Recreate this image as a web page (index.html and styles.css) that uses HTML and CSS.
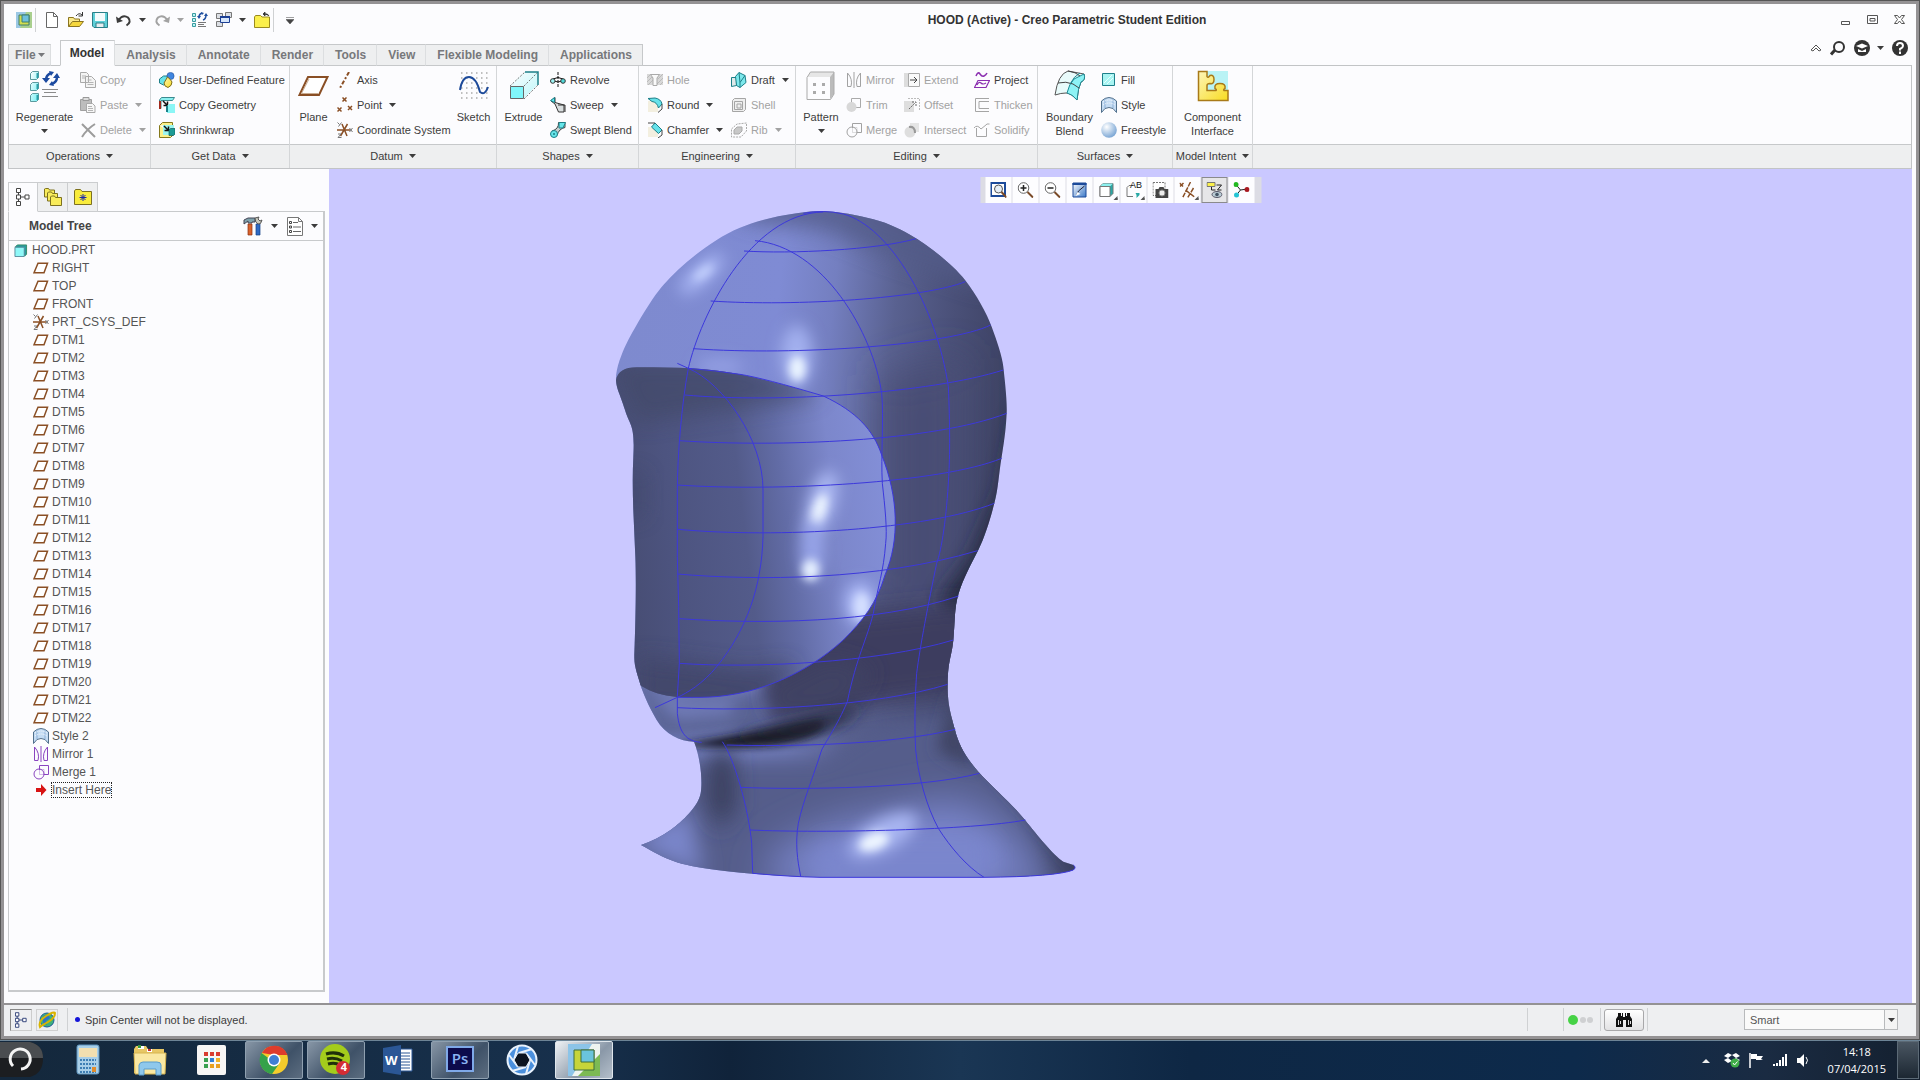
FILE: index.html
```html
<!DOCTYPE html>
<html lang="en">
<head>
    <meta charset="UTF-8">
    <meta name="viewport" content="width=device-width, initial-scale=1.0">
    <title>HOOD (Active) - Creo Parametric Student Edition</title>
    <link rel="stylesheet" href="styles.css">
</head>
<body>
    <!-- Shared icons -->
    <svg class="sprite" aria-hidden="true">
        <linearGradient id="gCyan" x1="0" y1="0" x2="1" y2="1"><stop offset="0" stop-color="#fff"/><stop offset="1" stop-color="#6ff0f4"/></linearGradient>
        <linearGradient id="gYellow" x1="0" y1="0" x2="1" y2="1"><stop offset="0" stop-color="#fdf5b8"/><stop offset="1" stop-color="#f8dc20"/></linearGradient>
        <linearGradient id="gBlue" x1="0" y1="0" x2="1" y2="1"><stop offset="0" stop-color="#fff"/><stop offset="1" stop-color="#3a78c8"/></linearGradient>
        <radialGradient id="gBall" cx=".35" cy=".3" r=".7"><stop offset="0" stop-color="#fff"/><stop offset="1" stop-color="#7fa9d6"/></radialGradient>

        <symbol id="caret" viewBox="0 0 7 4"><path d="M0 0h7L3.500 4z" fill="currentColor"/></symbol>
        <symbol id="logo" viewBox="0 0 16 16"><path d="M0 0h16v16H0z" fill="#a9cf8e"/><path d="M0 0h10L4 16H0z" fill="#9cc8e4"/><path d="M3 3h10v10H3z" fill="#d2dd4f" stroke="#3f7f6c"/><path d="M6 3h7v7H6z" fill="#6fc0dc" stroke="#3f7f6c"/></symbol>
        <symbol id="new" viewBox="0 0 16 16"><path d="M2.500.5h7l4 4v11h-11zM9.500.5v4h4" fill="#fff" stroke="#666"/></symbol>
        <symbol id="open" viewBox="0 0 16 16"><path d="M.5 14.500v-9h5l1 1.500h5v3" fill="#fbe98a" stroke="#8a7420"/><path d="M.5 14.500l4-5h11l-4 5z" fill="#f6d73c" stroke="#8a7420"/><path d="M8 4q3-4 6-1M14.500 0v4h-4" fill="none" stroke="#333"/></symbol>
        <symbol id="save" viewBox="0 0 16 16"><path d="M.5.5h15v15H2L.5 14z" fill="#5fd0d8" stroke="#2b7f88"/><path d="M3 1h10v8H3z" fill="#f4fbfc"/><path d="M4 11h8v4.500H4z" fill="#e8eef0" stroke="#2b7f88"/></symbol>
        <symbol id="undo" viewBox="0 0 16 16"><path d="M2.500 8Q7 2 12 5.500 16 10 10.500 13.500" fill="none" stroke="currentColor" stroke-width="2"/><path d="M0 4.500l1 6.500 6-2z" fill="currentColor"/></symbol>
        <symbol id="redo" viewBox="0 0 16 16"><path d="M13.500 8Q9 2 4 5.500 0 10 5.500 13.500" fill="none" stroke="currentColor" stroke-width="2"/><path d="M16 4.500l-1 6.500-6-2z" fill="currentColor"/></symbol>
        <symbol id="regen-s" viewBox="0 0 16 16"><path d="M.5 1.500h3v3h-3zM.5 6.500h3v3h-3zM.5 11.500h3v3h-3z" fill="#bdf6f6" stroke="#3a9aa0"/><path d="M7 5q0-3 3-4M14 3q0 4-3 5" fill="none" stroke="#2050a0" stroke-width="1.500"/><path d="M5 4h4L7 7zM12 4h4l-2-3zM9 0l3 1-2 2z" fill="#2050a0"/><path d="M6 10.500h8M6 12.500h6M6 14.500h8" stroke="#777"/></symbol>
        <symbol id="windows" viewBox="0 0 16 16"><path d="M.5 1.500h6v5h-6zM9.500.5h6v5h-6zM.5 9.500h6v5h-6z" fill="#dcdfe4" stroke="#777"/><path d="M4.500 4.500h9v6h-9z" fill="#d6e6fb" stroke="#1c3f94"/><path d="M4 5h10" stroke="#1c3f94" stroke-width="2"/></symbol>
        <symbol id="closefolder" viewBox="0 0 16 16"><path d="M.5 15.500V5l1-1.500h5L8 5h7.500v10.500z" fill="#fbef4c" stroke="#9a8a20"/><path d="M9 2l2-2v4zM10 2q4-1 5 2" fill="#333" stroke="#333" stroke-width=".8"/></symbol>

        <symbol id="regen" viewBox="0 0 32 32"><g fill="url(#gCyan)" stroke="#5b9a9e"><path d="M1.500 3.500l2-2h6v6l-2 2h-6zM1.500 14.500l2-2h6v6l-2 2h-6zM1.500 25.500l2-2h6v6l-2 2h-6z"/></g><path d="M8.500 3v5M8.500 14v5M8.500 25v5" stroke="#2aa0a8" stroke-width="2"/><path d="M17 10q0-5 5-7M28 7q0 5-5 7" fill="none" stroke="#1c4aa0" stroke-width="2.500"/><path d="M13 8h8l-4 5zM24 8h7l-3-5zM20 1l5 1-3 4zM25 16l-5-1 3-4z" fill="#1c4aa0"/><path d="M13 19.500h16M15 22.500h12M13 26.500h16" stroke="#8b8b8b"/></symbol>
        <symbol id="copy" viewBox="0 0 16 16"><path d="M.5.5h6l2 2v8h-8zM5.500 4.500h6l4 4v7h-10z" fill="#f4f4f4" stroke="#a9a9a9"/><path d="M2 4h4M2 6h3M7.500 8h4M7.500 10.500h6M7.500 12.500h6" stroke="#b5b5b5"/></symbol>
        <symbol id="paste" viewBox="0 0 16 16"><path d="M.5 2.500h11v11H.5z" fill="#bdbdbd" stroke="#a0a0a0"/><path d="M3 .5h6v3H3z" fill="#ddd" stroke="#999"/><path d="M6.500 6.500h6l2.500 2.500v6.500H6.500z" fill="#f7f7f7" stroke="#a9a9a9"/><path d="M8 9.500h4M8 11.500h5M8 13.500h5" stroke="#b5b5b5"/></symbol>
        <symbol id="delete" viewBox="0 0 16 16"><path d="M2 2l13 13M15 2Q7 7 2 15" fill="none" stroke="#9c9c9c" stroke-width="2"/></symbol>
        <symbol id="udf" viewBox="0 0 16 16"><path d="M.5 7l4-3h5l-1 6-4 3-4-2z" fill="#66e2ea" stroke="#207f88"/><circle cx="11.500" cy="4" r="3.600" fill="#3f86e0" stroke="#1f4f9c" stroke-width=".6"/><path d="M8.500 5q3 2 4.500 5 0 4-4 5.500-4-1-4-4.500z" fill="url(#gYellow)" stroke="#7c6c18"/></symbol>
        <symbol id="copygeom" viewBox="0 0 16 16"><path d="M.5 3l2-2.500h13l-2 3H2v8H.500z" fill="#8bf0f0" stroke="#3a8a90"/><path d="M0 4h2v8H0z" fill="#a12a1c"/><path d="M4 4l4 4M8.500 4.500v4h-4" stroke="#111" stroke-width="1.500" fill="none"/><path d="M8 9l2-2h6v9H8z" fill="#8bf6f6"/><path d="M8 9v6" stroke="#1c8088" stroke-width="2"/></symbol>
        <symbol id="shrink" viewBox="0 0 16 16"><path d="M.5 3.500l3-3h10v3M.5 3.500v12h11l3-3" fill="#fbf08a" stroke="#84781c"/><path d="M4 3h11v10H4z" fill="#9df6f0"/><path d="M5 4l4 4M9.500 4.500v4h-4" stroke="#111" stroke-width="1.500" fill="none"/><path d="M10 8l1.500-1.500H16V12l-1.500 1.500H10z" fill="#1c9a94" stroke="#0c5f60" stroke-width=".7"/></symbol>
        <symbol id="plane-l" viewBox="0 0 32 32"><path d="M10 7h19.500l-8.500 18H1.500z" fill="#fff" stroke="#8a4f25" stroke-width="2"/><path d="M11 9l-7.500 14.500H20" stroke="#c9ac92" fill="none"/></symbol>
        <symbol id="plane" viewBox="0 0 16 12"><path d="M5 1.200h9.500L11 10.800H1z" fill="#fff" stroke="#8a4f25" stroke-width="1.500"/></symbol>
        <symbol id="axis" viewBox="0 0 16 16"><path d="M12 0L3 16" stroke="#8a4f25" stroke-width="2" stroke-dasharray="4 2 2 2"/></symbol>
        <symbol id="point" viewBox="0 0 16 16"><path d="M5.500.5l4 4m0-4l-4 4M.500 10.500l4 4m0-4l-4 4M11 9l4 4m0-4l-4 4" stroke="#8a4f25" stroke-width="1.500"/></symbol>
        <symbol id="csys" viewBox="0 0 16 16"><path d="M0 8h13M5 2l5 12M10.500 2l-7 12" stroke="#8a4f25" stroke-width="1.500"/><path d="M12.500 6l3 4m0-4l-3 4M.500.500l2 2m2-2l-3 4M1 12h3l-3 3.500h3.500" stroke="#777" fill="none"/></symbol>
        <symbol id="sketch" viewBox="0 0 32 32"><path d="M3 3h28M3 8h28M3 13h28M3 18h28M3 23h28M3 28h28" stroke="#aaa" stroke-width="1.500" stroke-dasharray="1.500 3.500"/><path d="M2 20Q4 7 11 7t11 15q5 4 8-5" fill="none" stroke="#1d4a9a" stroke-width="2"/></symbol>
        <symbol id="extrude" viewBox="0 0 32 32"><path d="M16 2h14v12L16 28H2V16z" fill="url(#gCyan)" opacity=".45"/><path d="M2 16L17 2M16 16L30 2M16 29l14-14" stroke="#777" stroke-dasharray="2 1.500"/><path d="M17 2h13v13" fill="none" stroke="#1d7f88" stroke-width="1.500"/><path d="M2.500 16.500h13v12h-13z" fill="#80f7fb" stroke="#666"/></symbol>
        <symbol id="revolve" viewBox="0 0 16 16"><path d="M8 0v16" stroke="#111" stroke-dasharray="3 1"/><path d="M3 7q5-3 10 0M4 9q4 2 8 0" fill="none" stroke="#111"/><circle cx="2.800" cy="9" r="2.300" fill="#9ff4f4" stroke="#333"/><circle cx="13" cy="9" r="2.300" fill="#4fd8d8" stroke="#333"/></symbol>
        <symbol id="sweep" viewBox="0 0 16 16"><path d="M1 4l4-3.500v5l9 2.500v7H8.500L5 7z" fill="#d9dedf" stroke="#333"/><path d="M.5 3.500l4-3v5z" fill="#5fe6ea" stroke="#1c7f88"/><path d="M8 8h7v7" fill="none" stroke="#333"/></symbol>
        <symbol id="blend" viewBox="0 0 16 16"><path d="M2 9Q9 7 8.500.5H15v5q-6 1-8 8z" fill="#c6d0d0" stroke="#444"/><path d="M9 .5h6.500L13 6H9z" fill="#66e6ea" stroke="#1c7f88"/><circle cx="4" cy="12" r="3.500" fill="#66e6ea" stroke="#1c7f88"/><circle cx="4" cy="12" r="1" fill="#1c7f88"/></symbol>
        <symbol id="hole" viewBox="0 0 16 16"><path d="M0 2h4l2 3v8H0zM12 2h4v11h-6V5z" fill="#d8d8d8"/><path d="M0 6l4-4M0 10l6-6M1 13l5-5M11 7l5-5M10 12l6-6M13 13l3-3" stroke="#bbb"/><path d="M3.500 2.500h9L10 6v7.500H6V6z" fill="#fafafa" stroke="#aaa"/></symbol>
        <symbol id="round" viewBox="0 0 16 16"><path d="M1 4h6l4 5v6H1z" fill="#f3efe0"/><path d="M1 1.500l7-.5q6 1 7 6l-3.500 4Q10 5 5 4.500z" fill="#66e2ea" stroke="#1c7f88"/><path d="M15 7v5l-4 3.500" fill="none" stroke="#444"/></symbol>
        <symbol id="chamfer" viewBox="0 0 16 16"><path d="M1 5h5l5 5v5H1z" fill="#f3efe0"/><path d="M4.500 5L8 1l7 7-3.500 3.500z" fill="#66e2ea" stroke="#1c7f88"/><path d="M1 1h7M15 8v5l-4 3" fill="none" stroke="#444"/></symbol>
        <symbol id="draft" viewBox="0 0 16 16"><path d="M.5 5.500h5v8l-5 1z" fill="#dfe9e9" stroke="#1c7f88"/><path d="M5.500 13.500l-1-9L8 .5l6 3 1 7-6 5z" fill="#7de8ec" stroke="#1c7f88"/><path d="M8 .5l1 10 5-7M9 10.500v5" stroke="#1c7f88" fill="none"/></symbol>
        <symbol id="shell" viewBox="0 0 16 16"><path d="M1.500 3.500l2-2h11v11l-2 2h-11zM3.500 4.500h8v8h-8zM6 7h4v4H6z" fill="#efefef" stroke="#a5a5a5"/></symbol>
        <symbol id="rib" viewBox="0 0 16 16"><path d="M.5 7L6 2l9.500-1v8L10 15H.5z" fill="none" stroke="#aaa" stroke-dasharray="2 1"/><path d="M3 12V8l3-3h5v4l-3 3z" fill="#c8c8c8" stroke="#aaa"/></symbol>
        <symbol id="pattern" viewBox="0 0 32 32"><path d="M2 7l4-5h23l-4 5z" fill="#e6e6e6"/><path d="M25 7l4-5v22l-4 5z" fill="#bbb"/><path d="M2 7.500L5.500 2H29v22l-3.500 5.500H2z" fill="none" stroke="#aaa"/><path d="M8 13h3v3H8zM17 13h3v3h-3zM8 21h3v3H8zM17 21h3v3h-3z" fill="#aaa"/></symbol>
        <symbol id="mirror" viewBox="0 0 16 16"><path d="M8 0v16" stroke="currentColor"/><path d="M1.500 1v13.500H5Q7 7 1.500 1M14.500 1v13.500H11Q9 7 14.500 1" fill="none" stroke="currentColor"/></symbol>
        <symbol id="trim" viewBox="0 0 16 16"><path d="M5.500 7V1.500h9v9H10" fill="none" stroke="#aaa"/><circle cx="5.500" cy="10" r="5" fill="#d8d8d8"/></symbol>
        <symbol id="merge" viewBox="0 0 16 16"><path d="M6.500 6V1.500h9v9H11" fill="none" stroke="currentColor"/><circle cx="6" cy="10" r="5" fill="none" stroke="currentColor"/><path d="M6.500 5.500h4.500v5H6.500z" fill="none" stroke="currentColor" opacity=".35"/></symbol>
        <symbol id="extend" viewBox="0 0 16 16"><path d="M0 1h4v14H0z" fill="#ddd"/><path d="M4.500 1.500h11v13h-11z" fill="#fafafa" stroke="#aaa"/><path d="M6 8h6M10 5l3 3-3 3" fill="none" stroke="#444"/></symbol>
        <symbol id="offset" viewBox="0 0 16 16"><path d="M0 4h10v11H0z" fill="#dedede"/><path d="M4 1.500h11.500V13" fill="none" stroke="#bbb" stroke-dasharray="2 1"/><path d="M5 12l6-6M8 5h4v4" fill="none" stroke="#666" stroke-dasharray="2 1"/></symbol>
        <symbol id="intersect" viewBox="0 0 16 16"><path d="M6 1h9v9H6z" fill="#e5e5e5"/><circle cx="6" cy="10" r="5.500" fill="#dedede"/><path d="M5 5q6-1 6 6" stroke="#999" stroke-width="2" fill="none"/></symbol>
        <symbol id="project" viewBox="0 0 16 16"><path d="M2 4q2-5 4-2t4 2 3-3" fill="none" stroke="#8b2fb0" stroke-width="1.500"/><path d="M4 8.500h11.500l-3.500 7H.500zM3 13q2-4 4-2t5 0" fill="none" stroke="#8b2fb0" stroke-width="1.200"/></symbol>
        <symbol id="thicken" viewBox="0 0 16 16"><path d="M15 14.500H1.500v-13H15M15 4.500H5v7h10" fill="none" stroke="#a5a5a5"/></symbol>
        <symbol id="solidify" viewBox="0 0 16 16"><path d="M2.500 6v8.500h10V6M0 6q3-4 7 1 5-4 6-5h2.500" fill="none" stroke="#a5a5a5"/></symbol>
        <symbol id="boundary" viewBox="0 0 32 32"><path d="M1 25Q4 4 14 1l16 3q2 6-3 8-3 6-4 18-6-7-11-7t-11 2z" fill="#e9fbfb" stroke="#555"/><path d="M20 9l10-5q2 6-3 8-3 6-4 18-5-6-10-7 2-9 7-14z" fill="#8df3f5" stroke="#1c8a94"/><path d="M4 13q8-2 15 1l6 4M14 1q8 1 12 5" fill="none" stroke="#444"/><path d="M16 14q4-8 10-11" fill="none" stroke="#1c8a94"/></symbol>
        <symbol id="fill" viewBox="0 0 16 16"><path d="M1.500 1.500h12v12h-12z" fill="#a8f4f2" stroke="#1d7f8a"/><path d="M3 11l8-8M6 12l6-6" stroke="#e4fffe"/></symbol>
        <symbol id="style" viewBox="0 0 16 16"><path d="M.5 4Q4 .5 8 .5T15.500 4v11.500L12 11.500q-4-2-8 0L.5 15.500z" fill="#c4dcf4" stroke="#52708c"/><path d="M4 2v9M12 2v9" stroke="#8db0d6"/><path d="M2 5q6-4 12 0M2 8q6-4 12 0" stroke="#fff" stroke-dasharray="1 1" fill="none"/></symbol>
        <symbol id="ball" viewBox="0 0 16 16"><circle cx="8" cy="8" r="7.800" fill="url(#gBall)"/></symbol>
        <symbol id="component" viewBox="0 0 32 32"><path d="M1 1h30v30H1z" fill="#b9f3f5"/><path d="M1.500 1.500H10v5q1 2 3-1 4-1 4 4t-4 4q-3 0-3 2v5h9q1-1-1-2-1-5 5-5t5 5q-2 1-1 2h4v10h-29.500z" fill="url(#gYellow)" stroke="#a87a18" stroke-width="1.500"/></symbol>

        <symbol id="fit" viewBox="0 0 16 16"><path d="M.5 1h14v13H.5z" fill="#fff" stroke="#1c4a9a" stroke-width="2"/><circle cx="8" cy="7" r="4" fill="#e6eef6" stroke="#555"/><path d="M11 10l5 5.500" stroke="#7a4a28" stroke-width="2"/></symbol>
        <symbol id="zin" viewBox="0 0 16 16"><circle cx="6" cy="6" r="5.300" fill="#fff" stroke="#666"/><path d="M3 6h6M6 3v6" stroke="#222" stroke-width="1.500"/><path d="M10 10l5.500 5.500" stroke="#7a4a28" stroke-width="2"/></symbol>
        <symbol id="zout" viewBox="0 0 16 16"><circle cx="6" cy="6" r="5.300" fill="#fff" stroke="#666"/><path d="M3 6h6" stroke="#222" stroke-width="1.500"/><path d="M10 10l5.500 5.500" stroke="#7a4a28" stroke-width="2"/></symbol>
        <symbol id="repaint" viewBox="0 0 16 16"><path d="M1.500 1h13v14h-13z" fill="url(#gBlue)" stroke="#1c4a9a"/><path d="M1 2h14" stroke="#1c4a9a" stroke-width="2"/><path d="M5 13l2-4 6-5" fill="none" stroke="#223"/><path d="M4 14l2-4 3 2z" fill="#fff"/></symbol>
        <symbol id="box" viewBox="0 0 16 16"><path d="M1.500 4.500l3-3h10v10l-3 3h-10z" fill="#29a9a6" stroke="#777"/><path d="M1.500 4.500h10v10h-10z" fill="#fff" stroke="#777"/><path d="M2 4l2.500-2.500h10L12 4z" fill="#8cf0ee"/></symbol>
        <symbol id="cube" viewBox="0 0 14 14"><path d="M1 3l2-2h10v10l-2 2z" fill="#269c9e" stroke="#386"/><path d="M.5 3.500h10v10H.5z" fill="#8ff8f8" stroke="#589"/></symbol>
        <symbol id="views" viewBox="0 0 16 16"><path d="M1.500 14.500v-9l2-2h4M1.500 14.500h6" fill="none" stroke="#777"/><path d="M10 11h4v2l-3 3v-3z" fill="#29a9a6"/></symbol>
        <symbol id="camera" viewBox="0 0 16 16"><path d="M.5.500h12v13H.5z" fill="#fff" stroke="#777" stroke-dasharray="2 1"/><path d="M3 7h3l1-2h4l1 2h4v9H3z" fill="#444"/><circle cx="9.500" cy="11" r="3" fill="#eee" stroke="#888"/></symbol>
        <symbol id="datums" viewBox="0 0 16 16"><path d="M0 1l4 4m0-4L0 5M11 0L3 16M6 8l9 7M14 6l-6 10" stroke="#8a4f25" stroke-width="1.500" stroke-dasharray="5 1"/></symbol>
        <symbol id="annot" viewBox="0 0 16 16"><path d="M.5.500h8v4h-8z" fill="#fbf04c" stroke="#777"/><path d="M5 5v3h4M10 3h5l-4 5h4" fill="none" stroke="#222"/><ellipse cx="10.500" cy="12.500" rx="5" ry="3" fill="#b9cbd4" stroke="#556"/><circle cx="10.500" cy="12.500" r="1.800" fill="#456"/></symbol>
        <symbol id="spin" viewBox="0 0 16 16"><path d="M2 2l5 6 7-1M7 8l-4 5" stroke="#222" fill="none"/><circle cx="2.500" cy="2.500" r="2.500" fill="#22b922"/><circle cx="13.500" cy="7.500" r="2.500" fill="#a81820"/><circle cx="3" cy="13" r="2.500" fill="#25c4d4"/></symbol>

        <symbol id="treeicon" viewBox="0 0 14 18"><path d="M.500.500h4v4h-4zM.500 7h4v4h-4zM.500 13.500h4v4h-4zM9 7h4v4H9zM2.500 4.500V7M2.500 11v2.500M4.500 9H9" fill="#fff" stroke="currentColor"/></symbol>
        <symbol id="folders" viewBox="0 0 18 18"><g fill="#f9ec5a" stroke="#7c7020"><path d="M.500 9V1l1-.500h3l1 1.500h5v7z"/><path d="M3.500 13V5l1-1h3l1 1.500h5V13z"/><path d="M6.500 17.500V9l1-1h3l1 1.500h6v8z"/></g></symbol>
        <symbol id="favorites" viewBox="0 0 18 16"><path d="M.500 15.500V2l1-1.500h5L8 2.500h9.500v13z" fill="#f9ec3c" stroke="#7c7020"/><path d="M9 5v7M5.500 8.500h7M6.500 6l5 5m0-5l-5 5" stroke="#1c28a8"/></symbol>
        <symbol id="tools" viewBox="0 0 20 20"><path d="M1 4l4-2h7v4H9v1H5V5L1 8z" fill="#7fa2ac" stroke="#445"/><path d="M5 8h4v11H5z" fill="#d9632c" stroke="#8a2f10" stroke-width=".7"/><path d="M13 8h4v11h-4z" fill="#2f6ac4" stroke="#123f88" stroke-width=".7"/><path d="M12 2q0 5 3 6t4-4l-2 1-2-2 1-2z" fill="#c9c9bd" stroke="#555"/></symbol>
        <symbol id="list" viewBox="0 0 16 19"><path d="M.500.500h11l4 4v14H.500zM11.500.500v4h4" fill="#fff" stroke="#777"/><path d="M6 5.500h5M6 10h8M6 14.500h8" stroke="#666"/><path d="M2.500 4.500h2v2h-2zM2.500 9h2v2h-2zM2.500 13.500h2v2h-2z" fill="none" stroke="#444"/></symbol>
        <symbol id="insert" viewBox="0 0 16 16"><path d="M3 6h5V2l5.500 6L8 14v-4H3z" fill="#d81414"/></symbol>
    </svg>

    <div class="window">
        <!-- Quick access bar and title -->
        <header class="titlebar">
            <div class="quick">
                <svg class="ic"><use href="#logo"/></svg>
                <i class="sep"></i>
                <button aria-label="New"><svg class="ic"><use href="#new"/></svg></button>
                <button aria-label="Open"><svg class="ic"><use href="#open"/></svg></button>
                <button aria-label="Save"><svg class="ic"><use href="#save"/></svg></button>
                <button aria-label="Undo"><svg class="ic"><use href="#undo"/></svg><svg class="caret"><use href="#caret"/></svg></button>
                <button aria-label="Redo" disabled><svg class="ic"><use href="#redo"/></svg><svg class="caret"><use href="#caret"/></svg></button>
                <button aria-label="Regenerate"><svg class="ic"><use href="#regen-s"/></svg></button>
                <button aria-label="Windows"><svg class="ic"><use href="#windows"/></svg><svg class="caret"><use href="#caret"/></svg></button>
                <button aria-label="Close"><svg class="ic"><use href="#closefolder"/></svg></button>
                <i class="sep"></i>
                <button aria-label="Customize toolbar"><svg class="custom" viewBox="0 0 8 7"><path d="M0 .5h8M0 2.500h8L4 7z" fill="#444" stroke="#444" stroke-width=".5"/></svg></button>
            </div>
            <h1>HOOD (Active) - Creo Parametric Student Edition</h1>
            <div class="winbtns">
                <button aria-label="Minimize"><svg width="12" height="12"><path d="M1.500 7.500h8v3h-8z" fill="none" stroke="#555"/></svg></button>
                <button aria-label="Restore"><svg width="12" height="12"><path d="M.500 1.500h10v8H.500zM3 4.500h5v2.500H3z" fill="none" stroke="#555"/></svg></button>
                <button aria-label="Close window"><svg width="12" height="12"><path d="M.500 1.500h3l2 2.500 2-2.500h3L7.500 5.500l3 4h-3l-2-2.500-2 2.500h-3l3-4z" fill="#fff" stroke="#555"/></svg></button>
            </div>
        </header>

        <nav class="tabs">
            <button class="tab file">File<svg class="caret"><use href="#caret"/></svg></button>
            <button class="tab active">Model</button>
            <button class="tab">Analysis</button>
            <button class="tab">Annotate</button>
            <button class="tab">Render</button>
            <button class="tab">Tools</button>
            <button class="tab">View</button>
            <button class="tab">Flexible Modeling</button>
            <button class="tab">Applications</button>
            <div class="tabtools">
                <button aria-label="Minimize the ribbon"><svg width="12" height="8"><path d="M1 6l5-5 5 5-2 1-3-3-3 3z" fill="#fff" stroke="#555"/></svg></button>
                <button aria-label="Command search"><svg width="16" height="16"><circle cx="9" cy="7" r="5" fill="none" stroke="#333" stroke-width="2"/><path d="M5 10l-4 4.500" stroke="#333" stroke-width="3"/></svg></button>
                <button aria-label="Learning connector"><svg width="16" height="16"><circle cx="8" cy="8" r="8" fill="#333"/><path d="M2 6l6-2.500L14 6 8 8.500zM4 9l4 2 4-2v3H4z" fill="#fff"/></svg><svg class="caret"><use href="#caret"/></svg></button>
                <button aria-label="Help"><svg width="16" height="16"><circle cx="8" cy="8" r="8" fill="#333"/><path d="M5 6q0-3 3-3t3 3q0 1.500-3 3v1.500M8 11.500V14" fill="none" stroke="#fff" stroke-width="2"/></svg></button>
            </div>
        </nav>

        <!-- Ribbon -->
        <div class="ribbon">
            <section class="group operations">
                <div class="cmds">
                    <button class="big"><svg><use href="#regen"/></svg>Regenerate<svg class="caret"><use href="#caret"/></svg></button>
                    <div class="col">
                        <button class="cmd" disabled><svg class="ic"><use href="#copy"/></svg>Copy</button>
                        <button class="cmd" disabled><svg class="ic"><use href="#paste"/></svg>Paste<svg class="caret"><use href="#caret"/></svg></button>
                        <button class="cmd" disabled><svg class="ic"><use href="#delete"/></svg>Delete<svg class="caret"><use href="#caret"/></svg></button>
                    </div>
                </div>
                <button class="label">Operations<svg class="caret"><use href="#caret"/></svg></button>
            </section>
            <section class="group getdata">
                <div class="cmds">
                    <div class="col">
                        <button class="cmd"><svg class="ic"><use href="#udf"/></svg>User-Defined Feature</button>
                        <button class="cmd"><svg class="ic"><use href="#copygeom"/></svg>Copy Geometry</button>
                        <button class="cmd"><svg class="ic"><use href="#shrink"/></svg>Shrinkwrap</button>
                    </div>
                </div>
                <button class="label">Get Data<svg class="caret"><use href="#caret"/></svg></button>
            </section>
            <section class="group datum">
                <div class="cmds">
                    <button class="big"><svg><use href="#plane-l"/></svg>Plane</button>
                    <div class="col">
                        <button class="cmd"><svg class="ic"><use href="#axis"/></svg>Axis</button>
                        <button class="cmd"><svg class="ic"><use href="#point"/></svg>Point<svg class="caret"><use href="#caret"/></svg></button>
                        <button class="cmd"><svg class="ic"><use href="#csys"/></svg>Coordinate System</button>
                    </div>
                    <button class="big"><svg><use href="#sketch"/></svg>Sketch</button>
                </div>
                <button class="label">Datum<svg class="caret"><use href="#caret"/></svg></button>
            </section>
            <section class="group shapes">
                <div class="cmds">
                    <button class="big"><svg><use href="#extrude"/></svg>Extrude</button>
                    <div class="col">
                        <button class="cmd"><svg class="ic"><use href="#revolve"/></svg>Revolve</button>
                        <button class="cmd"><svg class="ic"><use href="#sweep"/></svg>Sweep<svg class="caret"><use href="#caret"/></svg></button>
                        <button class="cmd"><svg class="ic"><use href="#blend"/></svg>Swept Blend</button>
                    </div>
                </div>
                <button class="label">Shapes<svg class="caret"><use href="#caret"/></svg></button>
            </section>
            <section class="group engineering">
                <div class="cmds">
                    <div class="col">
                        <button class="cmd" disabled><svg class="ic"><use href="#hole"/></svg>Hole</button>
                        <button class="cmd"><svg class="ic"><use href="#round"/></svg>Round<svg class="caret"><use href="#caret"/></svg></button>
                        <button class="cmd"><svg class="ic"><use href="#chamfer"/></svg>Chamfer<svg class="caret"><use href="#caret"/></svg></button>
                    </div>
                    <div class="col">
                        <button class="cmd"><svg class="ic"><use href="#draft"/></svg>Draft<svg class="caret"><use href="#caret"/></svg></button>
                        <button class="cmd" disabled><svg class="ic"><use href="#shell"/></svg>Shell</button>
                        <button class="cmd" disabled><svg class="ic"><use href="#rib"/></svg>Rib<svg class="caret"><use href="#caret"/></svg></button>
                    </div>
                </div>
                <button class="label">Engineering<svg class="caret"><use href="#caret"/></svg></button>
            </section>
            <section class="group editing">
                <div class="cmds">
                    <button class="big"><svg><use href="#pattern"/></svg>Pattern<svg class="caret"><use href="#caret"/></svg></button>
                    <div class="col">
                        <button class="cmd" disabled><svg class="ic"><use href="#mirror"/></svg>Mirror</button>
                        <button class="cmd" disabled><svg class="ic"><use href="#trim"/></svg>Trim</button>
                        <button class="cmd" disabled><svg class="ic"><use href="#merge"/></svg>Merge</button>
                    </div>
                    <div class="col">
                        <button class="cmd" disabled><svg class="ic"><use href="#extend"/></svg>Extend</button>
                        <button class="cmd" disabled><svg class="ic"><use href="#offset"/></svg>Offset</button>
                        <button class="cmd" disabled><svg class="ic"><use href="#intersect"/></svg>Intersect</button>
                    </div>
                    <div class="col">
                        <button class="cmd"><svg class="ic"><use href="#project"/></svg>Project</button>
                        <button class="cmd" disabled><svg class="ic"><use href="#thicken"/></svg>Thicken</button>
                        <button class="cmd" disabled><svg class="ic"><use href="#solidify"/></svg>Solidify</button>
                    </div>
                </div>
                <button class="label">Editing<svg class="caret"><use href="#caret"/></svg></button>
            </section>
            <section class="group surfaces">
                <div class="cmds">
                    <button class="big"><svg><use href="#boundary"/></svg>Boundary<br>Blend</button>
                    <div class="col">
                        <button class="cmd"><svg class="ic"><use href="#fill"/></svg>Fill</button>
                        <button class="cmd"><svg class="ic"><use href="#style"/></svg>Style</button>
                        <button class="cmd"><svg class="ic"><use href="#ball"/></svg>Freestyle</button>
                    </div>
                </div>
                <button class="label">Surfaces<svg class="caret"><use href="#caret"/></svg></button>
            </section>
            <section class="group intent">
                <div class="cmds">
                    <button class="big"><svg><use href="#component"/></svg>Component<br>Interface</button>
                </div>
                <button class="label">Model Intent<svg class="caret"><use href="#caret"/></svg></button>
            </section>
            <div class="group rest"><div class="cmds"></div><div class="label"></div></div>
        </div>

        <div class="work">
            <!-- Model tree -->
            <aside class="side">
                <div class="sidetabs">
                    <button class="on" aria-label="Model Tree"><svg width="14" height="18"><use href="#treeicon"/></svg></button>
                    <button aria-label="Folder Browser"><svg width="18" height="18"><use href="#folders"/></svg></button>
                    <button aria-label="Favorites"><svg width="18" height="16"><use href="#favorites"/></svg></button>
                </div>
                <div class="panel">
                    <div class="panelhead">
                        <h2>Model Tree</h2>
                        <button aria-label="Settings"><svg width="20" height="20"><use href="#tools"/></svg><svg class="caret"><use href="#caret"/></svg></button>
                        <button aria-label="Show"><svg width="16" height="19"><use href="#list"/></svg><svg class="caret"><use href="#caret"/></svg></button>
                    </div>
                    <ul class="tree">
                        <li class="root"><svg class="ic"><use href="#cube"/></svg>HOOD.PRT</li>
                        <li><svg class="ic"><use href="#plane"/></svg>RIGHT</li>
                        <li><svg class="ic"><use href="#plane"/></svg>TOP</li>
                        <li><svg class="ic"><use href="#plane"/></svg>FRONT</li>
                        <li><svg class="ic"><use href="#csys"/></svg>PRT_CSYS_DEF</li>
                        <li><svg class="ic"><use href="#plane"/></svg>DTM1</li>
                        <li><svg class="ic"><use href="#plane"/></svg>DTM2</li>
                        <li><svg class="ic"><use href="#plane"/></svg>DTM3</li>
                        <li><svg class="ic"><use href="#plane"/></svg>DTM4</li>
                        <li><svg class="ic"><use href="#plane"/></svg>DTM5</li>
                        <li><svg class="ic"><use href="#plane"/></svg>DTM6</li>
                        <li><svg class="ic"><use href="#plane"/></svg>DTM7</li>
                        <li><svg class="ic"><use href="#plane"/></svg>DTM8</li>
                        <li><svg class="ic"><use href="#plane"/></svg>DTM9</li>
                        <li><svg class="ic"><use href="#plane"/></svg>DTM10</li>
                        <li><svg class="ic"><use href="#plane"/></svg>DTM11</li>
                        <li><svg class="ic"><use href="#plane"/></svg>DTM12</li>
                        <li><svg class="ic"><use href="#plane"/></svg>DTM13</li>
                        <li><svg class="ic"><use href="#plane"/></svg>DTM14</li>
                        <li><svg class="ic"><use href="#plane"/></svg>DTM15</li>
                        <li><svg class="ic"><use href="#plane"/></svg>DTM16</li>
                        <li><svg class="ic"><use href="#plane"/></svg>DTM17</li>
                        <li><svg class="ic"><use href="#plane"/></svg>DTM18</li>
                        <li><svg class="ic"><use href="#plane"/></svg>DTM19</li>
                        <li><svg class="ic"><use href="#plane"/></svg>DTM20</li>
                        <li><svg class="ic"><use href="#plane"/></svg>DTM21</li>
                        <li><svg class="ic"><use href="#plane"/></svg>DTM22</li>
                        <li><svg class="ic"><use href="#style"/></svg>Style 2</li>
                        <li><svg class="ic purple"><use href="#mirror"/></svg>Mirror 1</li>
                        <li><svg class="ic purple"><use href="#merge"/></svg>Merge 1</li>
                        <li><svg class="ic"><use href="#insert"/></svg><span class="insert">Insert Here</span></li>
                    </ul>
                </div>
            </aside>

            <!-- Graphics area -->
            <main class="viewport">
                <div class="viewbar">
                    <button aria-label="Refit"><svg class="ic"><use href="#fit"/></svg></button>
                    <button aria-label="Zoom In"><svg class="ic"><use href="#zin"/></svg></button>
                    <button aria-label="Zoom Out"><svg class="ic"><use href="#zout"/></svg></button>
                    <button aria-label="Repaint"><svg class="ic"><use href="#repaint"/></svg></button>
                    <button class="more" aria-label="Display Style"><svg class="ic"><use href="#box"/></svg></button>
                    <button class="more views"><svg class="ic"><use href="#views"/></svg><span>AB</span></button>
                    <button aria-label="View Manager"><svg class="ic"><use href="#camera"/></svg></button>
                    <button class="more" aria-label="Datum Display Filters"><svg class="ic"><use href="#datums"/></svg></button>
                    <button class="pressed" aria-label="Annotation Display"><svg class="ic"><use href="#annot"/></svg></button>
                    <button aria-label="Spin Center"><svg class="ic"><use href="#spin"/></svg></button>
                </div>
                <svg class="model" viewBox="0 0 1560 2130" role="img" aria-label="HOOD model">
                    <defs>
                        <filter id="b10" x="-150%" y="-150%" width="400%" height="400%"><feGaussianBlur stdDeviation="13"/></filter>
                        <filter id="b20" x="-150%" y="-150%" width="400%" height="400%"><feGaussianBlur stdDeviation="22"/></filter>
                        <filter id="b30" x="-100%" y="-100%" width="300%" height="300%"><feGaussianBlur stdDeviation="32"/></filter>
                        <filter id="b60" x="-100%" y="-100%" width="300%" height="300%"><feGaussianBlur stdDeviation="60"/></filter>
                        <linearGradient id="skin" gradientUnits="userSpaceOnUse" x1="80" y1="440" x2="1250" y2="560">
                            <stop offset="0" stop-color="#7e8ace"/><stop offset=".4" stop-color="#7f8bd4"/><stop offset=".54" stop-color="#747fc0"/>
                            <stop offset=".7" stop-color="#596190"/><stop offset=".85" stop-color="#4a5078"/><stop offset="1" stop-color="#3d4263"/>
                        </linearGradient>
                        <linearGradient id="inside" gradientUnits="userSpaceOnUse" x1="80" y1="1000" x2="915" y2="900">
                            <stop offset="0" stop-color="#474d73"/><stop offset=".2" stop-color="#4d5480"/><stop offset=".45" stop-color="#535b8a"/>
                            <stop offset=".6" stop-color="#626ca6"/><stop offset=".78" stop-color="#7c87cb"/><stop offset="1" stop-color="#8490d9"/>
                        </linearGradient>
                        <clipPath id="outClip"><path d="M700 63C750 65 800 75 850 88S935 120 975 143 1090 225 1125 270 1190 370 1205 410 1237 500 1240 530 1252 630 1250 670 1245 740 1235 800 1226 890 1213 940 1185 1040 1165 1080 1120 1165 1106 1210 1095 1300 1090 1350 1074 1410 1073 1480 1085 1580 1095 1620 1125 1700 1165 1745 1265 1840 1305 1890 1390 1995 1420 2015L1450 2025Q1460 2032 1450 2040 1400 2060 1180 2062H690C600 2058 500 2055 380 2040S230 2008 153 1965C185 1955 215 1940 245 1918S325 1850 332 1810 330 1700 312 1655C270 1655 225 1632 200 1590S155 1500 150 1480 132 1430 133 1400 140 1200 136 1100 125 900 130 800 120 710 105 660 80 600 78 570 95 490 110 460 180 330 220 285 310 195 380 150 520 85 620 70Q660 63 700 63z"/></clipPath>
                        <clipPath id="faceClip"><path d="M78 570Q85 532 140 532 330 528 450 553T700 618C800 665 850 720 875 795 925 920 930 1050 885 1155 860 1240 820 1290 760 1350 640 1460 480 1522 330 1522 230 1525 190 1510 150 1485L60 1400V570z"/></clipPath>
                    </defs>
                    <g clip-path="url(#outClip)">
                        <path d="M0 0h1560v2130H0z" fill="url(#skin)"/>
                        <!-- head shading -->
                        <path d="M450 20H1050L1200 300 900 200 700 120 450 90z" fill="#535b88" opacity=".8" filter="url(#b30)"/>
                        <path d="M880 560L1120 500V1500H600L880 1200z" fill="#484e74" filter="url(#b60)"/>
                        <path d="M1290 650L1240 900 1150 1100 1050 1230 1110 1330 1230 1200 1350 900z" fill="#24273a" filter="url(#b30)"/>
                        <!-- neck -->
                        <path d="M560 1300L1150 1240V1500L900 1530 500 1600z" fill="#3d3d5e" filter="url(#b30)"/>
                        <path d="M0 1700H700L860 1600 1250 1540 1400 2130H0z" fill="#555d8b" filter="url(#b30)"/>
                        <path d="M1090 1500L1150 1740 1040 1680z" fill="#3f4565" filter="url(#b20)"/>
                        <path d="M560 1980L740 1900 1090 1830 1230 1900 1380 2100H530z" fill="#7a86cd" filter="url(#b60)"/>
                        <path d="M700 1960H1200V2100H650z" fill="#7a86cd" filter="url(#b30)"/>
                        <path d="M1130 1660L1500 2080 1480 1900z" fill="#394060" filter="url(#b20)"/>
                        <path d="M120 1960L300 1850 340 2060z" fill="#7a86cb" filter="url(#b30)"/>
                        <path d="M360 1690L430 1680 440 1850 390 1920 350 1840z" fill="#3a3f5e" filter="url(#b30)"/>
                        <!-- chin -->
                        <path d="M110 1440L260 1520 460 1500 560 1530 500 1630 200 1650z" fill="#5a6394" filter="url(#b20)"/>
                        <path d="M160 1490L300 1530 440 1525 420 1575 260 1590z" fill="#717cb8" filter="url(#b20)"/>
                        <path d="M520 1500L720 1400 850 1440 760 1560 560 1580z" fill="#3f4264" filter="url(#b30)"/>
                        <path d="M230 1668Q420 1640 540 1615T700 1590Q720 1615 640 1645T400 1672z" fill="#14161f" filter="url(#b10)"/>
                        <path d="M420 1640Q600 1600 820 1550L740 1610 640 1640z" fill="#222538" filter="url(#b20)"/>
                        <!-- highlights -->
                        <ellipse cx="335" cy="252" rx="85" ry="30" transform="rotate(-42 335 252)" fill="#a6b3f2" filter="url(#b20)"/>
                        <ellipse cx="340" cy="248" rx="36" ry="12" transform="rotate(-38 340 248)" fill="#c9d6ff" filter="url(#b10)"/>
                        <ellipse cx="620" cy="500" rx="48" ry="95" fill="#a3b0ef" filter="url(#b20)"/>
                        <ellipse cx="622" cy="535" rx="25" ry="38" fill="#eaf4ff" filter="url(#b10)"/>
                        <ellipse cx="390" cy="530" rx="70" ry="24" fill="#94a0e4" filter="url(#b20)"/>
                        <ellipse cx="880" cy="1935" rx="115" ry="48" transform="rotate(-28 880 1935)" fill="#a9b6f2" filter="url(#b20)"/>
                        <ellipse cx="852" cy="1955" rx="46" ry="25" transform="rotate(-20 852 1955)" fill="#eef6ff" filter="url(#b10)"/>

                        <!-- inner surface seen through the opening -->
                        <g clip-path="url(#faceClip)">
                            <path d="M0 500h1000v1100H0z" fill="url(#inside)"/>
                            <path d="M60 520H480L700 620 420 660 140 700z" fill="#434867" opacity=".7" filter="url(#b30)"/>
                            <path d="M100 850H160V980H100z" fill="#41466a" opacity=".6" filter="url(#b30)"/>
                            <path d="M140 1400L480 1440 620 1420 500 1560H140z" fill="#42476a" opacity=".9" filter="url(#b30)"/>
                            <ellipse cx="695" cy="940" rx="40" ry="100" transform="rotate(16 695 940)" fill="#adbaf4" filter="url(#b20)"/>
                            <ellipse cx="688" cy="960" rx="20" ry="50" transform="rotate(18 688 960)" fill="#eef6ff" filter="url(#b10)"/>
                            <ellipse cx="668" cy="1080" rx="36" ry="90" fill="#98a5ea" filter="url(#b20)"/>
                            <ellipse cx="662" cy="1140" rx="26" ry="32" fill="#e6f0ff" filter="url(#b10)"/>
                            <ellipse cx="810" cy="1240" rx="44" ry="64" fill="#aebbf8" filter="url(#b20)"/>
                            <ellipse cx="815" cy="1250" rx="24" ry="42" fill="#d5e0ff" filter="url(#b10)"/>
                        </g>
                    </g>
                    <g class="wire">
                        <path d="M462 183C600 192 860 180 978 146M362 333C620 350 1000 325 1126 275M310 476C620 498 1080 465 1202 405M285 615C560 640 1020 610 1240 540M268 752C560 772 1030 755 1250 670M262 885C560 905 1050 880 1235 805M264 1018C560 1045 1010 1020 1213 940M262 1152C500 1172 860 1172 1163 1082M268 1286C500 1302 860 1302 1106 1218M268 1420C480 1435 860 1420 1090 1350M262 1553C480 1565 860 1550 1073 1483M410 1665C600 1670 900 1665 1096 1618M450 1792C640 1800 1000 1795 1168 1750M480 1920C700 1930 1150 1920 1306 1890"/>
                        <path d="M700 66C480 70 330 380 295 535 275 640 262 800 262 900V1100L266 1250 268 1420 262 1520V1570C268 1630 290 1655 335 1657"/>
                        <path d="M495 152C700 170 850 430 875 610 882 680 872 800 877 880 885 950 892 1020 887 1060 880 1150 865 1180 850 1270 830 1350 800 1400 772 1535 740 1610 710 1650 695 1680 670 1760 640 1830 625 1900 615 1960 622 2010 632 2058"/>
                        <path d="M640 70Q700 58 760 72C900 110 1040 350 1075 590 1080 700 1080 800 1076 860 1070 980 1055 1080 1040 1120 1015 1240 990 1370 980 1450 975 1520 973 1600 977 1680 985 1760 1010 1850 1045 1915 1080 1970 1130 2030 1182 2062"/>
                        <path d="M262 520L295 535C400 580 520 750 519 900V1040C515 1190 470 1320 380 1430 340 1480 290 1510 262 1522L195 1553"/>
                        <path d="M397 1655C430 1700 475 1850 485 1960L488 2050"/>
                        <path d="M295 535Q380 542 450 553T700 618C800 665 850 720 875 795 925 920 930 1050 885 1155 860 1240 820 1290 760 1350 640 1460 480 1522 330 1522H262"/>
                        <path d="M488 2050Q600 2060 690 2062H1180Q1400 2060 1450 2040 1460 2032 1450 2025"/>
                    </g>
                </svg>
            </main>
        </div>

        <footer class="status">
            <button class="sbtn in" aria-label="Model tree"><svg width="12" height="18"><use href="#treeicon"/></svg></button>
            <button class="sbtn" aria-label="Web browser"><svg width="18" height="18" viewBox="0 0 18 18"><circle cx="9" cy="9" r="7" fill="#3fb07c" stroke="#1f5a9c"/><path d="M5 5l5-2 2 4-4 3 1 4-4-2z" fill="#2f74c4"/><path d="M2 16Q0 10 8 5t9-3q0 5-7 9t-8 5z" fill="none" stroke="#d9b400" stroke-width="2"/></svg></button>
            <i class="sep"></i>
            <span class="bullet"></span>
            <span class="msg">Spin Center will not be displayed.</span>
            <i class="sep"></i>
            <i class="sep lights-sep"></i>
            <svg class="lights" width="28" height="12"><circle cx="6" cy="6" r="5" fill="#46d246"/><circle cx="16" cy="6" r="3" fill="#cfd0d2"/><circle cx="23" cy="6" r="3" fill="#cfd0d2"/></svg>
            <i class="sep"></i>
            <button class="find" aria-label="Find"><svg width="18" height="16"><path d="M1 7l2-3V1h3v3h1V1h1v4h2V1h1v3h1V1h3v3l2 3v8h-6V8H8v7H1z" fill="#111"/><path d="M3 8h1v5H3zM13 8h1v5h-1zM5 9h1v3H5zM15 9h1v3h-1z" fill="#ddd"/></svg></button>
            <i class="sep"></i>
            <div class="filter">
                <select aria-label="Selection filter"><option>Smart</option></select>
                <svg class="caret"><use href="#caret"/></svg>
            </div>
        </footer>
    </div>

    <!-- Desktop taskbar -->
    <div class="taskbar">
        <button class="start" aria-label="Start"><svg width="44" height="39"><path d="M0 1h30q13 3 13 17T30 36H0z" fill="#1c1e21"/><path d="M0 1h30q13 3 13 16H0z" fill="#4a4d50"/><path d="M13 25a10 10 0 1 1 8 3" fill="none" stroke="#f4f4f4" stroke-width="3"/></svg></button>
        <button class="task" aria-label="Calculator"><svg width="24" height="32"><rect x="1" y="1" width="22" height="29" rx="2" fill="#a9cfe8" stroke="#5c93bd"/><path d="M3 4h18v9H3z" fill="#f2dfb0"/><path d="M4 16h16M4 20h16M4 24h16M4 28h16" stroke="#3f7fb4" stroke-width="2" stroke-dasharray="2 1"/><path d="M16 23h4v5h-4z" fill="#e08c2c"/></svg></button>
        <button class="task" aria-label="File Explorer"><svg width="34" height="32"><path d="M1 5l2-3h10l2 3h16v24H1z" fill="#e8c764"/><path d="M5 2h6v3H5zM14 5h5v3h-5z" fill="#fff"/><path d="M5 1h3v3H5z" fill="#3a9a3a"/><path d="M15 5h3v2h-3z" fill="#c33"/><path d="M1 9h32l-1 21H2z" fill="#fae8a2" stroke="#d6b450"/><path d="M6 31V21q1-3 4-3h14q4 0 4 3v10h-5v-6H11v6z" fill="#8fc8ec" stroke="#5a9ccc"/></svg></button>
        <button class="task" aria-label="App launcher"><svg width="32" height="32"><rect x="1" y="1" width="29" height="30" rx="2" fill="#f7f6f5"/><path d="M8 8h4v4H8zM14 8h4v4h-4zM20 8h4v4h-4z" fill="#d93c30"/><path d="M8 14h4v4H8z" fill="#3aa050"/><path d="M14 14h4v4h-4z" fill="#2f7fd8"/><path d="M20 14h4v4h-4z" fill="#f0b428"/><path d="M8 20h4v4H8z" fill="#3aa050"/><path d="M14 20h4v4h-4zM20 20h4v4h-4z" fill="#e8a020"/></svg></button>
        <button class="task open" aria-label="Chrome"><svg width="30" height="30" viewBox="-15 -15 30 30"><circle r="14" fill="#f4cc2c"/><path d="M-12-7A14 14 0 0 1 13.500-5H0z" fill="#de3c2c"/><path d="M-12.500-7A14 14 0 0 0-2 14L5 4-3 0z" fill="#35a24a"/><circle r="6.500" fill="#fff"/><circle r="5" fill="#3f7fd4"/></svg></button>
        <button class="task open" aria-label="Spotify"><svg width="34" height="34"><circle cx="16" cy="16" r="15" fill="#a4cc1c"/><path d="M7 11q10-3 18 2M8 16q8-2 15 2M9 21q7-2 12 1" fill="none" stroke="#20300a" stroke-width="3"/><circle cx="24" cy="25" r="7" fill="#d42c34"/></svg><span class="count">4</span></button>
        <button class="task" aria-label="Word"><svg width="30" height="30"><path d="M15 4h14v22H15z" fill="#fff" stroke="#2b5796"/><path d="M18 8h9M18 11h9M18 14h9M18 17h9M18 20h9M18 23h9" stroke="#2b5796"/><path d="M0 3l18-3v30L0 27z" fill="#2b5796"/></svg><span class="word">W</span></button>
        <button class="task open"><span class="ps">Ps</span></button>
        <button class="task" aria-label="Camera"><svg width="32" height="32" viewBox="-16 -16 32 32"><circle r="14.500" fill="#4a8fdc" stroke="#e9f2fc" stroke-width="2"/><path d="M-3-7L10-11M4-7L13 5M8 0L4 14M4 7L-10 11M-4 7L-13-5M-8 0L-4-14" stroke="#e9f2fc" stroke-width="2"/><path d="M-4-7h8l4 7-4 7h-8l-4-7z" fill="#0c1420" stroke="#e9f2fc"/></svg></button>
        <button class="task open current" aria-label="Creo Parametric"><svg width="32" height="32"><path d="M0 0h32v32H0z" fill="#eef4f0"/><path d="M0 0h24L4 32H0z" fill="#8cc4e8"/><path d="M32 10v22H10z" fill="#7cba54"/><path d="M6 6h20v20H6z" fill="#c6d43a" stroke="#3f6f3a"/><path d="M13 6h13v12H13z" fill="#6ac4dc" stroke="#3f6f3a"/></svg></button>
        <div class="tray">
            <button aria-label="Show hidden icons"><svg width="8" height="5"><path d="M0 5l4-4 4 4z" fill="#eee"/></svg></button>
            <svg width="16" height="16"><path d="M4 1l4 2-4 3-4-2zM12 1l4 3-4 2-4-3zM4 6l4 3-4 2-4-3zM12 6l4 2-4 3-4-2z" fill="#fff"/><circle cx="11" cy="11" r="4.500" fill="#3fae49"/><path d="M9 11l1.500 2 3-3.500" stroke="#fff" fill="none"/></svg>
            <svg width="16" height="16"><path d="M2 1v15" stroke="#fff" stroke-width="1.500"/><path d="M3 2h6v2h6l-2 3 2 1H8V7H3z" fill="#fff"/></svg>
            <svg width="16" height="16"><path d="M1 12h2v2H1zM4 11h2v3H4zM7 8h2v6H7zM10 5h2v9h-2zM13 2h2v12h-2z" fill="#fff"/></svg>
            <svg width="14" height="16"><path d="M1 6h3l4-4v13l-4-4H1z" fill="#fff"/><path d="M10 5q3 3 0 7" stroke="#fff" fill="none"/></svg>
        </div>
        <div class="clock"><span>14:18</span><span>07/04/2015</span></div>
        <button class="desktop" aria-label="Show desktop"></button>
    </div>
</body>
</html>
```

FILE: styles.css
```css
* {
    margin: 0;
    padding: 0;
    box-sizing: border-box;
}

body {
    display: flex;
    flex-direction: column;
    height: 100vh;
    overflow: hidden;
    font-family: "Liberation Sans", Arial, sans-serif;
    font-size: 11px;
    color: #3c3c3c;
    background: #12253f;
}

button {
    display: flex;
    align-items: center;
    background: none;
    border: none;
    font: inherit;
    color: inherit;
    white-space: nowrap;
}

button:disabled {
    color: #a2a2a2;
}

svg {
    flex: none;
    display: block;
}

.sprite {
    position: absolute;
    width: 0;
    height: 0;
}

.ic {
    width: 16px;
    height: 16px;
}

.caret {
    width: 7px;
    height: 4px;
}

.sep {
    width: 1px;
    align-self: stretch;
    background: #cfd1d3;
}

/* Main window */
.window {
    flex: 1;
    min-height: 0;
    display: flex;
    flex-direction: column;
    background: #fcfcfe;
    border: 3px solid #949294;
    outline: 1px solid #555;
    margin: 1px;
}

/* Title bar */
.titlebar {
    display: flex;
    align-items: center;
    height: 32px;
    padding: 0 8px 0 12px;
}

.quick {
    display: flex;
    align-items: center;
    gap: 8px;
    height: 24px;
}

.quick .sep {
    margin: 0 -5px;
}

.quick .sep + button {
    margin-left: 5px;
}

.quick .sep + button:last-child {
    margin-left: 9px;
}

.quick button {
    gap: 7px;
}

.custom {
    width: 8px;
    height: 7px;
}

.titlebar h1 {
    flex: 1;
    text-align: center;
    font-size: 12px;
    color: #333;
}

.winbtns {
    display: flex;
    gap: 15px;
    width: 68px;
}

/* Ribbon tabs */
.tabs {
    display: flex;
    align-items: flex-end;
    height: 30px;
    margin: 0 4px -1px;
    position: relative;
}

.tab {
    justify-content: center;
    height: 22px;
    padding: 0 10px 0 11px;
    font-size: 12px;
    font-weight: bold;
    color: #77787b;
    background: #eeeff0;
    border: 1px solid #c6c8ca;
    border-left: none;
    border-right-color: #dcdee0;
}

.tab:nth-child(9) {
    border-right-color: #c6c8ca;
}

.file {
    padding: 0 5px 0 6px;
    margin-right: 9px;
    gap: 2px;
    border-left: 1px solid #c6c8ca;
}

.active {
    height: 26px;
    padding: 0 10px 0 9px;
    color: #333;
    background: #fcfcfe;
    border-left: 1px solid #c6c8ca;
    border-bottom-color: #fcfcfe;
}

.tabtools {
    display: flex;
    align-items: center;
    gap: 8px;
    margin-left: auto;
    padding: 0 4px 10px 0;
}

.tabtools button {
    gap: 7px;
}

/* Ribbon */
.ribbon {
    display: flex;
    margin: 0 4px;
    border: 1px solid #c2c4c6;
}

.group {
    display: flex;
    flex-direction: column;
    border-right: 1px solid #d4d6d8;
}

.rest {
    flex: 1;
    border-right: none;
}

.cmds {
    display: grid;
    height: 78px;
    padding-top: 1px;
}

.operations { width: 142px; }
.getdata { width: 139px; }
.datum { width: 207px; }
.shapes { width: 142px; }
.engineering { width: 157px; }
.editing { width: 242px; }
.surfaces { width: 135px; }
.intent { width: 80px; }

.operations .cmds { grid-template-columns: 71px 1fr; }
.getdata .cmds { padding-left: 8px; }
.datum .cmds { grid-template-columns: 47px 1fr 46px; }
.shapes .cmds { grid-template-columns: 53px 1fr; }
.engineering .cmds { grid-template-columns: 84px 1fr; padding-left: 8px; }
.editing .cmds { grid-template-columns: 50px 58px 70px 1fr; }
.surfaces .cmds { grid-template-columns: 63px 1fr; }

.big {
    flex-direction: column;
    text-align: center;
    line-height: 14px;
    padding-top: 3px;
    gap: 7px;
}

.big svg:first-child {
    width: 32px;
    height: 32px;
    margin-bottom: 1px;
}

.big .caret {
    margin-top: -2px;
}

.cmd {
    height: 25px;
    gap: 4px;
}

.cmd .caret {
    margin-left: 3px;
}

.label {
    display: flex;
    justify-content: center;
    gap: 6px;
    height: 24px;
    padding-bottom: 2px;
    background: #eeeff0;
    border-top: 1px solid #c6c8ca;
}

/* Work area */
.work {
    flex: 1;
    min-height: 0;
    display: flex;
    padding-right: 4px;
}

.side {
    width: 325px;
    display: flex;
    flex-direction: column;
    padding: 13px 4px 11px;
}

.sidetabs {
    display: flex;
    margin-bottom: -1px;
    position: relative;
}

.sidetabs button {
    justify-content: center;
    width: 30px;
    height: 30px;
    color: #444;
    background: #eeeff0;
    border: 1px solid #cbcdcf;
    border-left: none;
}

.sidetabs .on {
    background: #fcfcfe;
    border-left: 1px solid #cbcdcf;
    border-bottom-color: #fcfcfe;
}

.panel {
    flex: 1;
    min-height: 0;
    border: 1px solid #c8cacc;
    border-right-width: 2px;
    border-bottom-width: 2px;
}

.panelhead {
    display: flex;
    align-items: center;
    height: 29px;
    padding: 0 5px 0 20px;
    gap: 9px;
    border-bottom: 1px solid #c8cacc;
}

.panelhead h2 {
    flex: 1;
    font-size: 12px;
    color: #444;
}

.panelhead button {
    gap: 8px;
}

.tree {
    list-style: none;
    font-size: 12px;
    color: #555;
}

.tree li {
    display: flex;
    align-items: center;
    gap: 3px;
    height: 18px;
    padding-left: 24px;
}

.tree .root {
    padding-left: 5px;
    gap: 4px;
}

.root .ic {
    width: 14px;
    height: 13px;
}

.purple {
    color: #8a45c0;
}

.insert {
    outline: 1px dotted #222;
}

/* Graphics area */
.viewport {
    flex: 1;
    position: relative;
    overflow: hidden;
    background: #cac8ff;
}

.viewbar {
    position: absolute;
    top: 8px;
    left: 50%;
    transform: translateX(-50%);
    display: flex;
    gap: 1px;
    padding: 0 7px 0 5px;
    background: #dcdce4;
}

.viewbar button {
    justify-content: center;
    width: 26px;
    height: 26px;
    background: #fdfdff;
    position: relative;
}

.viewbar .pressed {
    background: #e6e6e8;
    border: 1px solid #8a8a8c;
}

.more::after {
    content: "";
    position: absolute;
    right: 2px;
    bottom: 3px;
    border: 2px solid;
    border-color: transparent #555 #555 transparent;
}

.views span {
    position: absolute;
    top: 3px;
    right: 4px;
    font-size: 9px;
    line-height: 10px;
    color: #111;
}

.model {
    width: 520px;
    margin: 21px 0 0 261px;
}

.wire {
    fill: none;
    stroke: #3c38dc;
    stroke-width: 3;
}

/* Status bar */
.status {
    display: flex;
    align-items: center;
    height: 33px;
    padding: 3px 18px 5px 6px;
    background: #eeeff1;
    border-top: 2px solid #949294;
}

.sbtn {
    justify-content: center;
    width: 22px;
    height: 22px;
    margin-right: 4px;
    color: #1c2f6c;
    border: 1px solid #d0d0d0;
}

.in {
    border-color: #888 #ccc #ccc #888;
}

.status .sep {
    margin: 0 3px 0 5px;
}

.bullet {
    width: 5px;
    height: 5px;
    margin: 0 5px 0 4px;
    border-radius: 50%;
    background: #1414d8;
}

.msg {
    flex: 1;
}

.status .lights-sep {
    margin-left: 32px;
}

.find {
    justify-content: center;
    width: 40px;
    height: 22px;
    border: 1px solid #a8a8aa;
    border-radius: 3px;
    background: linear-gradient(#fff, #e2e2e4);
}

.status .find + .sep {
    margin-left: 3px;
    margin-right: 96px;
}

.filter {
    position: relative;
    width: 154px;
}

.filter select {
    appearance: none;
    display: block;
    width: 100%;
    height: 21px;
    padding: 0 5px;
    font: inherit;
    color: #555;
    border: 1px solid #b8babc;
    background: linear-gradient(90deg, #fafafa 139px, #b8babc 139px, #b8babc 140px, #f4f4f4 140px);
}

.filter .caret {
    position: absolute;
    right: 3px;
    top: 9px;
    pointer-events: none;
}

/* Taskbar */
.taskbar {
    display: flex;
    align-items: flex-start;
    gap: 4px;
    height: 40px;
    border-top: 1px solid #6d8496;
    background: linear-gradient(90deg, #14283c, #17304c 30%, #10233a 38%, #1a3654 50%, #0e2744 62%, #0d2a4b 82%, #1a2b42 92%, #14202f);
}

.start {
    width: 55px;
    height: 38px;
}

.task {
    position: relative;
    justify-content: center;
    width: 58px;
    height: 38px;
}

.open {
    border: 1px solid #8fa0b0;
    border-radius: 2px;
    background: linear-gradient(135deg, #8796a6, #3f5268 60%, #5c6d80);
}

.current {
    border-color: #dfe6ec;
    background: linear-gradient(135deg, #eef1f4, #8a98a8 60%, #b4bfca);
}

.count {
    position: absolute;
    right: 17px;
    bottom: 4px;
    font: bold 11px "Open Sans", sans-serif;
    color: #fff;
}

.word {
    position: absolute;
    left: 16px;
    font: bold 13px "Open Sans", sans-serif;
    color: #fff;
}

.ps {
    width: 28px;
    height: 26px;
    margin-bottom: 3px;
    border: 2px solid #7fa9e8;
    background: #0c0b4c;
    font: 600 15px/20px "Open Sans", sans-serif;
    color: #8ab4f4;
    text-align: center;
}

.tray {
    display: flex;
    align-items: center;
    gap: 8px;
    height: 38px;
    margin-left: auto;
    padding-right: 14px;
}

.tray button {
    margin-right: 6px;
}

.clock {
    display: flex;
    flex-direction: column;
    align-items: center;
    padding-top: 2px;
    font: 11px/17px "Open Sans", sans-serif;
    color: #fff;
}

.desktop {
    width: 22px;
    height: 38px;
    margin: 0 1px 0 7px;
    border: 1px solid #5c6a76;
    background: linear-gradient(#4a5662, #1c2732);
}
```
